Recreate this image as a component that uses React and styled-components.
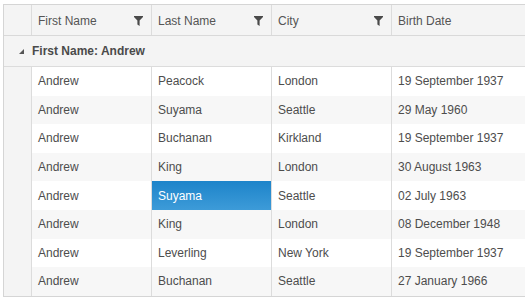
import React from "react";
import styled, { createGlobalStyle, css } from "styled-components";

const Global = createGlobalStyle`
  html, body { margin: 0; padding: 0; background: #ffffff; }
  body { font-family: "Liberation Sans", Arial, sans-serif; }
  *, *::before, *::after { box-sizing: border-box; }
`;

const COLS = "28px 120px 120px 120px 1fr";

const Grid = styled.div`
  margin: 4px 0 0 3px;
  width: 522px;
  border: 1px solid #d5d5d5;
  border-right: none;
  font-size: 12px;
  overflow: hidden;
`;

const HeaderRow = styled.div`
  display: grid;
  grid-template-columns: ${COLS};
  height: 31px;
  background: #f4f4f4;
  border-bottom: 1px solid #d9d9d9;
`;

const HeaderCell = styled.div`
  display: flex;
  align-items: center;
  justify-content: space-between;
  padding: 1px 8px 0 6px;
  color: #555555;
  border-right: 1px solid #dcdcdc;
  &:last-child { border-right: none; }
`;

const IndentCell = styled.div`
  background: #f4f4f4;
  border-right: 1px solid ${(p) => (p.$line ? "#dcdcdc" : "transparent")};
`;

const GroupRow = styled.div`
  display: flex;
  align-items: center;
  height: 31px;
  padding-bottom: 1px;
  background: #f4f4f4;
  border-bottom: 1px solid #dcdcdc;
`;

const GroupToggle = styled.div`
  width: 28px;
  display: flex;
  justify-content: flex-end;
  padding: 1px 8px 0 0;
`;

const GroupTitle = styled.span`
  font-weight: bold;
  color: #4a4a4a;
`;

const Row = styled.div`
  display: grid;
  grid-template-columns: ${COLS};
  height: 28.6px;
  background: ${(p) => (p.$alt ? "#f7f7f7" : "#ffffff")};
`;

const Cell = styled.div`
  display: flex;
  align-items: center;
  padding: 0 6px;
  color: #4d4d4d;
  white-space: nowrap;
  overflow: hidden;
  border-right: 1px solid #dcdcdc;
  &:last-child { border-right: none; }
  ${(p) =>
    p.$selected &&
    css`
      background: linear-gradient(to bottom, #1d84ca, #3d9bd8);
      color: #ffffff;
    `}
`;

const FilterIcon = () => (
  <svg width="9" height="10" viewBox="0 0 9 10">
    <path d="M0 0 H9 V1 L5.6 4.6 V10 L3.4 8.4 V4.6 L0 1 Z" fill="#4a4a4a" />
  </svg>
);

const Triangle = () => (
  <svg width="5" height="5" viewBox="0 0 5 5">
    <path d="M5 0 V5 H0 Z" fill="#555" />
  </svg>
);

const columns = [
  { title: "First Name", filter: true },
  { title: "Last Name", filter: true },
  { title: "City", filter: true },
  { title: "Birth Date", filter: false },
];

const data = [
  ["Andrew", "Peacock", "London", "19 September 1937"],
  ["Andrew", "Suyama", "Seattle", "29 May 1960"],
  ["Andrew", "Buchanan", "Kirkland", "19 September 1937"],
  ["Andrew", "King", "London", "30 August 1963"],
  ["Andrew", "Suyama", "Seattle", "02 July 1963"],
  ["Andrew", "King", "London", "08 December 1948"],
  ["Andrew", "Leverling", "New York", "19 September 1937"],
  ["Andrew", "Buchanan", "Seattle", "27 January 1966"],
];

export default function App() {
  return (
    <>
      <Global />
      <Grid>
        <HeaderRow>
          <IndentCell $line />
          {columns.map((c) => (
            <HeaderCell key={c.title}>
              <span>{c.title}</span>
              {c.filter && <FilterIcon />}
            </HeaderCell>
          ))}
        </HeaderRow>
        <GroupRow>
          <GroupToggle>
            <Triangle />
          </GroupToggle>
          <GroupTitle>First Name: Andrew</GroupTitle>
        </GroupRow>
        {data.map((r, i) => (
          <Row key={i} $alt={i % 2 === 1}>
            <IndentCell $line />
            {r.map((v, j) => (
              <Cell key={j} $selected={i === 4 && j === 1}>
                {v}
              </Cell>
            ))}
          </Row>
        ))}
      </Grid>
    </>
  );
}
